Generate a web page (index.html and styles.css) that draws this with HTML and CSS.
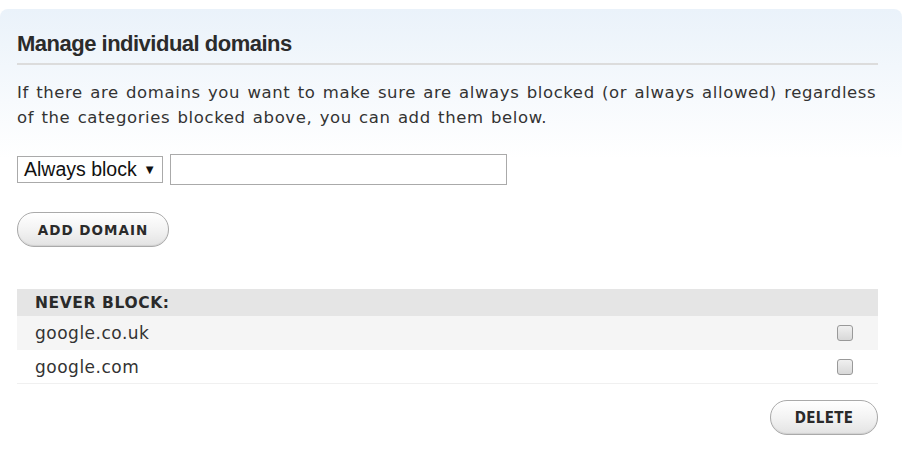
FILE: index.html
```html
<!DOCTYPE html>
<html>
<head>
<meta charset="utf-8">
<link rel="stylesheet" href="styles.css">
</head>
<body>
<div class="panel">
  <h2 class="title">Manage individual domains</h2>
  <p class="intro">If there are domains you want to make sure are always blocked (or always allowed) regardless of the categories blocked above, you can add them below.</p>
  <div class="add-row">
    <div class="select">Always block <span class="arrow">▼</span></div>
    <input class="domain-input" type="text">
  </div>
  <div class="btn-row"><button class="pill">ADD DOMAIN</button></div>
  <div class="list">
    <div class="list-head">NEVER BLOCK:</div>
    <div class="list-row odd"><span>google.co.uk</span><span class="check"></span></div>
    <div class="list-row"><span>google.com</span><span class="check"></span></div>
  </div>
  <div class="actions"><button class="pill delete">DELETE</button></div>
</div>
</body>
</html>
```
FILE: styles.css
```css
html, body { margin: 0; padding: 0; background: #fff; }
body { font-family: "DejaVu Sans", Verdana, sans-serif; color: #333; }
.panel {
  margin-top: 9px;
  width: 902px;
  box-sizing: border-box;
  padding: 22px 24px 30px 17px;
  border-radius: 8px 8px 0 0;
  background: linear-gradient(to bottom, #eaf2fa 0px, #ffffff 150px, #ffffff 100%);
}
.title {
  margin: 0;
  font-family: "Liberation Sans", Arial, sans-serif;
  font-weight: bold;
  font-size: 22px;
  letter-spacing: -0.5px;
  color: #2b2b2b;
  line-height: 25px;
  padding-bottom: 7px;
  border-bottom: 2px solid #dcdcdc;
}
.intro {
  margin: 15px -6px 0 0;
  font-size: 16.5px;
  letter-spacing: 0.6px;
  word-spacing: 1.5px;
  line-height: 25px;
  color: #333;
}
.add-row { display: flex; align-items: center; gap: 7px; margin-top: 24px; }
.select {
  box-sizing: border-box;
  width: 146px; height: 27px;
  border: 1px solid #aaa;
  background: #fff;
  font-family: "Liberation Sans", Arial, sans-serif;
  font-size: 19.5px;
  color: #111;
  padding-left: 6px;
  padding-right: 6px;
  line-height: 25px;
  display: flex; align-items: center; justify-content: space-between;
}
.arrow { font-size: 13px; }
.domain-input {
  box-sizing: border-box;
  width: 337px; height: 31px;
  border: 1px solid #aaa;
  margin: 0;
}
.btn-row { margin-top: 27px; }
.pill {
  box-sizing: border-box;
  height: 35px;
  padding: 0 22px;
  border: 1px solid #aaa;
  border-radius: 17px;
  background: linear-gradient(to bottom, #ffffff 0%, #f3f3f3 50%, #e3e3e3 100%);
  box-shadow: inset 0 -1px 1px rgba(0,0,0,0.08);
  font-family: "DejaVu Sans", Verdana, sans-serif;
  font-weight: bold;
  font-size: 13.5px;
  letter-spacing: 1px;
  color: #2a2a2a;
  cursor: pointer;
}
.btn-row .pill { width: 152px; padding: 0; }
.list { margin-top: 42px; }
.list-head {
  background: #e5e5e5;
  height: 27px; line-height: 28px;
  padding-left: 18px;
  font-weight: bold; font-size: 15.5px;
  color: #2a2a2a;
  letter-spacing: 0.6px;
}
.list-row {
  display: flex; align-items: center; justify-content: space-between;
  height: 34px;
  padding: 0 25px 0 18px;
  font-size: 17px;
  letter-spacing: 0.5px;
  color: #333;
}
.list-row.odd { background: #f5f5f5; }
.list-row:last-child { border-bottom: 1px solid #f0f0f0; height: 33px; }
.check {
  width: 14px; height: 14px;
  border: 1px solid #999;
  border-radius: 3px;
  background: linear-gradient(to bottom, #f0f0f0, #d8d8d8);
}
.actions { display: flex; justify-content: flex-end; margin-top: 16px; }
.pill.delete { width: 108px; padding: 0; font-family: "Liberation Sans Narrow", "DejaVu Sans Condensed", sans-serif; font-size: 15px; letter-spacing: 0.3px; }
```
